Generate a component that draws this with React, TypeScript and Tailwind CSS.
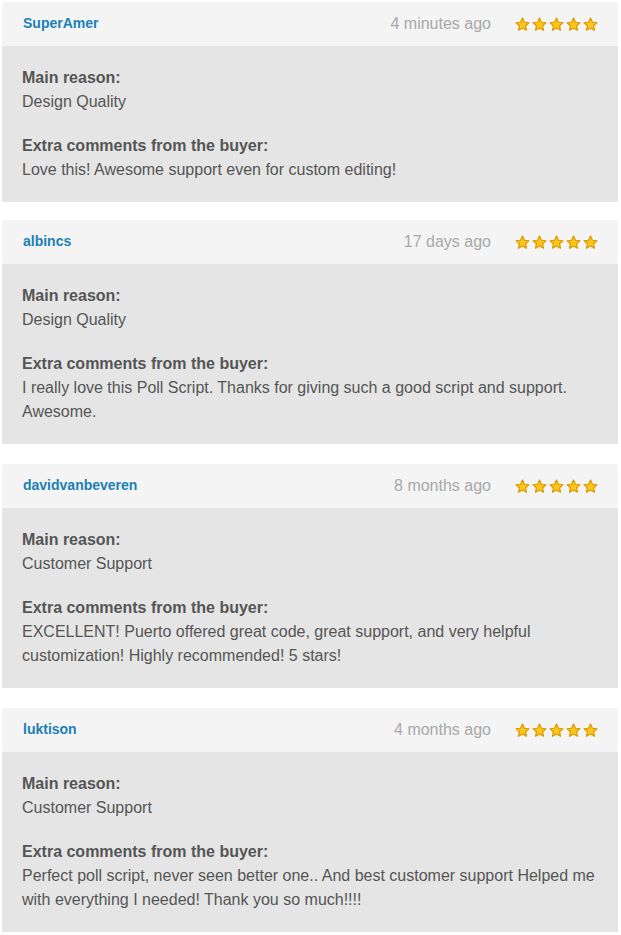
import React from "react";

type Review = {
	user: string;
	when: string;
	reason: string;
	comment: string;
};

const reviews: Review[] = [
	{
		user: "SuperAmer",
		when: "4 minutes ago",
		reason: "Design Quality",
		comment: "Love this! Awesome support even for custom editing!",
	},
	{
		user: "albincs",
		when: "17 days ago",
		reason: "Design Quality",
		comment:
			"I really love this Poll Script. Thanks for giving such a good script and support. Awesome.",
	},
	{
		user: "davidvanbeveren",
		when: "8 months ago",
		reason: "Customer Support",
		comment:
			"EXCELLENT! Puerto offered great code, great support, and very helpful customization! Highly recommended! 5 stars!",
	},
	{
		user: "luktison",
		when: "4 months ago",
		reason: "Customer Support",
		comment:
			"Perfect poll script, never seen better one.. And best customer support Helped me with everything I needed! Thank you so much!!!!",
	},
];

const Star = () => (
	<svg width="15" height="15" viewBox="0 0 24 24" className="block">
		<path
			d="M12 1.8l3.1 6.6 7.2.8-5.4 4.9 1.5 7.1L12 17.6l-6.4 3.6 1.5-7.1L1.7 9.2l7.2-.8z"
			fill="#ffc61a"
			stroke="#dd9a00"
			strokeWidth="2"
			strokeLinejoin="round"
		/>
	</svg>
);

const ReviewCard = ({ r }: { r: Review }) => (
	<div className="w-[616px]">
		<div className="flex h-[44px] items-center rounded-[3px] bg-[#f4f4f4] pl-[21px] pr-[20px]">
			<span className="-mt-[2px] text-[14px] font-bold text-[#1a80b6]">{r.user}</span>
			<span className="ml-auto text-[16px] text-[#a8a8a8]">{r.when}</span>
			<div className="ml-[24px] flex gap-[2px]">
				{[0, 1, 2, 3, 4].map((i) => (
					<Star key={i} />
				))}
			</div>
		</div>
		<div className="bg-[#e5e5e5] pl-[20px] pr-[20px] pt-[20px] pb-[20px] text-[16px] leading-[24px] text-[#555]">
			<p className="font-bold">Main reason:</p>
			<p>{r.reason}</p>
			<p className="mt-[20px] font-bold">Extra comments from the buyer:</p>
			<p>{r.comment}</p>
		</div>
	</div>
);

const App = () => {
	return (
		<div
			className="flex flex-col gap-[20px] bg-white px-[2px] pt-[2px] [&>*:first-child]:-mb-[2px]"
			style={{ fontFamily: '"Liberation Sans", Arial, sans-serif' }}
		>
			{reviews.map((r) => (
				<ReviewCard key={r.user} r={r} />
			))}
		</div>
	);
};

export default App;
